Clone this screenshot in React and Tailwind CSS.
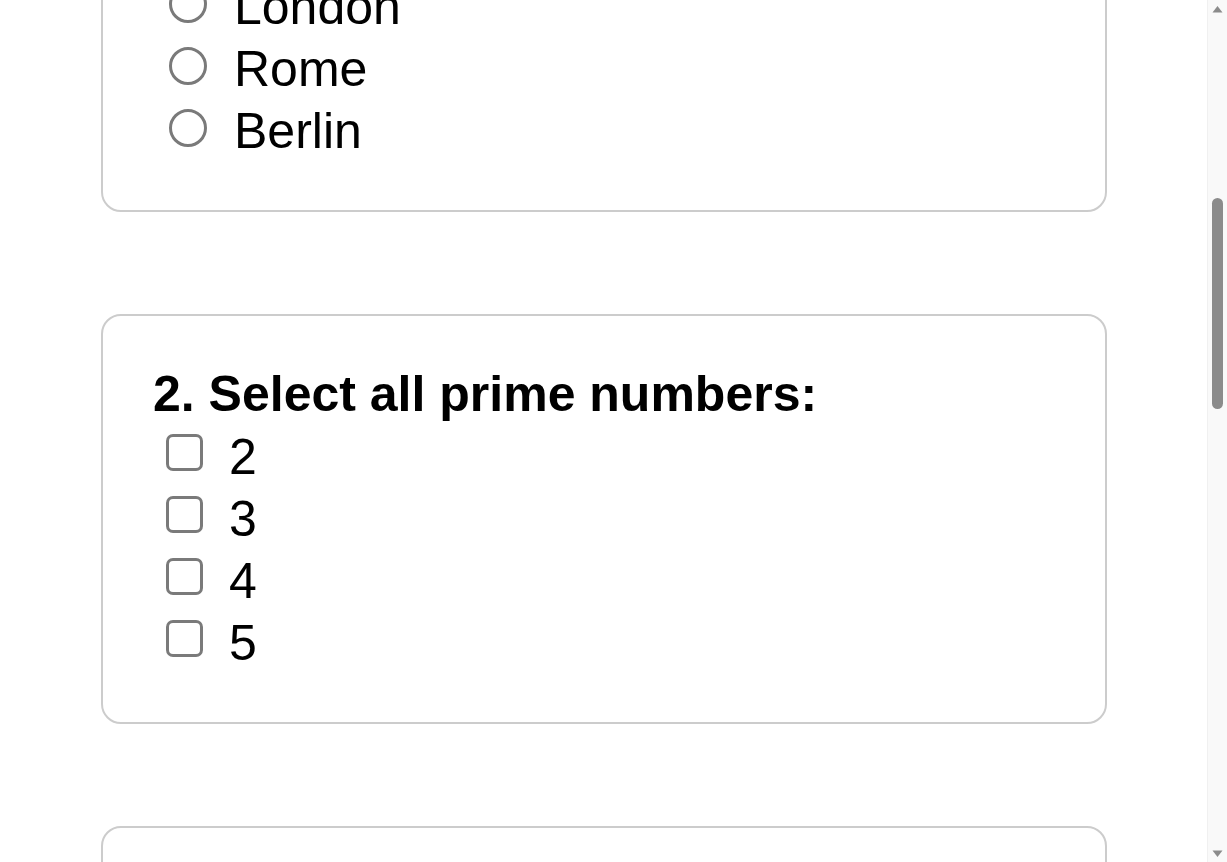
import React, { useLayoutEffect, useRef } from 'react';

const questions = [
  {
    id: 1,
    title: '1. What is the capital of France?',
    type: 'radio',
    options: ['Paris', 'London', 'Rome', 'Berlin'],
  },
  {
    id: 2,
    title: '2. Select all prime numbers:',
    type: 'checkbox',
    options: ['2', '3', '4', '5'],
  },
  {
    id: 3,
    title: '3. Which planet is known as the Red Planet?',
    type: 'radio',
    options: ['Venus', 'Mars', 'Jupiter', 'Saturn'],
  },
  {
    id: 4,
    title: '4. Select all even numbers:',
    type: 'checkbox',
    options: ['1', '6', '8', '9'],
  },
  {
    id: 5,
    title: '5. What is the largest ocean?',
    type: 'radio',
    options: ['Atlantic', 'Indian', 'Arctic', 'Pacific'],
  },
];

const OptionRow = ({ type, label }) => (
  <label className="flex items-start h-[62px]">
    {type === 'radio' ? (
      <span className="mt-[9px] ml-[16px] w-[38px] h-[38px] shrink-0 rounded-full border-[3px] border-[#7a7a7a] bg-white" />
    ) : (
      <span className="mt-[8px] ml-[13px] w-[37px] h-[37px] shrink-0 rounded-[7px] border-[3px] border-[#7a7a7a] bg-white" />
    )}
    <span className={`${type === 'radio' ? 'ml-[27px]' : 'ml-[26px]'} text-[50px] leading-[62px] text-black`}>
      {label}
    </span>
  </label>
);

const QuestionCard = ({ question }) => (
  <div className="w-[1006px] h-[410px] border-2 border-[#cccccc] rounded-[20px] bg-white px-[50px] pt-[50px]">
    <h2 className="text-[50px] font-bold leading-[56px] mb-[4px] text-black">{question.title}</h2>
    <div className="flex flex-col">
      {question.options.map((opt) => (
        <OptionRow key={opt} type={question.type} label={opt} />
      ))}
    </div>
  </div>
);

// 畫面上的捲軸（瀏覽器截圖不會畫出原生捲軸）
const ScrollBar = () => (
  <div className="w-[20px] h-full shrink-0 flex flex-col bg-[#f9f9f9] border-l border-[#f0f0f0]">
    <div className="h-[17px] flex items-center justify-center">
      <svg width="11" height="8" viewBox="0 0 11 8">
        <path d="M5.5 1 L10.5 7.5 L0.5 7.5 Z" fill="#8b8b8b" />
      </svg>
    </div>
    <div className="flex-1 flex justify-center">
      <div className="mt-[181px] w-[11px] h-[211px] rounded-full bg-[#8b8b8b]" />
    </div>
    <div className="h-[17px] flex items-center justify-center">
      <svg width="11" height="8" viewBox="0 0 11 8">
        <path d="M0.5 0.5 L10.5 0.5 L5.5 7 Z" fill="#8b8b8b" />
      </svg>
    </div>
  </div>
);

export default function App() {
  const scrollRef = useRef(null);

  // 捲動到第二題的位置
  useLayoutEffect(() => {
    if (scrollRef.current) scrollRef.current.scrollTop = 748;
  }, []);

  return (
    <div
      className="h-[862px] w-full flex overflow-hidden bg-white"
      style={{ fontFamily: '"Liberation Sans", Arial, sans-serif' }}
    >
      <div ref={scrollRef} className="flex-1 h-full overflow-y-scroll [scrollbar-width:none]">
        <div className="pl-[101px] flex flex-col gap-[102px]">
          <header className="h-[448px] pt-[100px]">
            <h1 className="text-[64px] font-bold leading-[74px] text-black">Quiz</h1>
            <p className="mt-[30px] text-[40px] leading-[48px] text-[#333333]">Answer the questions below.</p>
          </header>
          {questions.map((q) => (
            <QuestionCard key={q.id} question={q} />
          ))}
          <div className="pb-[199px]">
            <button className="h-[90px] px-[40px] rounded-[12px] bg-[#2563eb] text-white text-[40px] font-bold">
              Submit
            </button>
          </div>
        </div>
      </div>
      <ScrollBar />
    </div>
  );
}
